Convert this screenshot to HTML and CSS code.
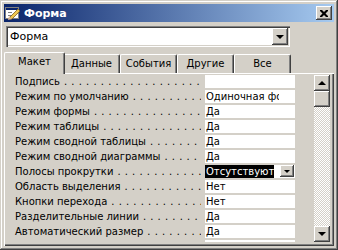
FILE: index.html
```html
<!DOCTYPE html>
<html lang="ru">
<head>
  <meta charset="UTF-8" />
  <title>Форма</title>
  <link rel="stylesheet" href="styles.css">
</head>
<body>
  <div class="window">
    <div class="titlebar">
      <svg class="app-icon" width="16" height="16" viewBox="0 0 16 16">
        <rect x="0.5" y="2.5" width="13" height="11" fill="#fff" stroke="#808080"/>
        <rect x="1" y="3" width="12" height="2" fill="#0a246a"/>
        <rect x="3" y="7" width="4" height="1" fill="#808080"/>
        <rect x="3" y="10" width="4" height="1" fill="#808080"/>
        <polygon points="5,12 13,4 15,6 7,14 5,14" fill="#f0c850" stroke="#806020" stroke-width="0.8"/>
        <polygon points="4,11 7,14 3,15" fill="#e0b890"/>
      </svg>
      <span class="title">Форма</span>
      <span class="close-btn">
        <svg width="8" height="7" viewBox="0 0 8 7">
          <path d="M0 0h2l2 2 2-2h2v1l-2.5 2.5 2.5 2.5v1h-2l-2-2-2 2h-2v-1l2.5-2.5-2.5-2.5z" fill="#000"/>
        </svg>
      </span>
    </div>

    <div class="object-select">
      <span class="object-name">Форма</span>
      <span class="drop-btn"><span class="arrow-down"></span></span>
    </div>

    <div class="tabs">
      <div class="tab active">Макет</div>
      <div class="tab">Данные</div>
      <div class="tab">События</div>
      <div class="tab">Другие</div>
      <div class="tab">Все</div>
    </div>

    <div class="panel">
      <div class="grid">
        <div class="row"><span class="label"><span class="name">Подпись</span></span><span class="value"></span></div>
        <div class="row"><span class="label"><span class="name">Режим по умолчанию</span></span><span class="value"><span class="text">Одиночная форма</span></span></div>
        <div class="row"><span class="label"><span class="name">Режим формы</span></span><span class="value"><span class="text">Да</span></span></div>
        <div class="row"><span class="label"><span class="name">Режим таблицы</span></span><span class="value"><span class="text">Да</span></span></div>
        <div class="row"><span class="label"><span class="name">Режим сводной таблицы</span></span><span class="value"><span class="text">Да</span></span></div>
        <div class="row"><span class="label"><span class="name">Режим сводной диаграммы</span></span><span class="value"><span class="text">Да</span></span></div>
        <div class="row"><span class="label"><span class="name">Полосы прокрутки</span></span><span class="value selected"><span class="text highlight">Отсутствуют</span><span class="cell-btn"><span class="arrow-down small"></span></span></span></div>
        <div class="row"><span class="label"><span class="name">Область выделения</span></span><span class="value"><span class="text">Нет</span></span></div>
        <div class="row"><span class="label"><span class="name">Кнопки перехода</span></span><span class="value"><span class="text">Нет</span></span></div>
        <div class="row"><span class="label"><span class="name">Разделительные линии</span></span><span class="value"><span class="text">Да</span></span></div>
        <div class="row"><span class="label"><span class="name">Автоматический размер</span></span><span class="value"><span class="text">Да</span></span></div>
        <div class="row"><span class="label"></span><span class="value"></span></div>
      </div>
      <div class="scrollbar">
        <span class="sb-btn"><span class="arrow-up"></span></span>
        <span class="sb-thumb"></span>
        <span class="sb-track"></span>
        <span class="sb-btn"><span class="arrow-down"></span></span>
      </div>
    </div>
  </div>
</body>
</html>
```

FILE: styles.css
```css
* {
  box-sizing: border-box;
}
body {
  margin: 0;
  font-family: "DejaVu Sans", Verdana, sans-serif;
  font-size: 10px;
  color: #000;
  background-color: #d4d0c8;
}
.window {
  width: 338px;
  height: 250px;
  padding: 4px;
  display: flex;
  flex-direction: column;
  background-color: #d4d0c8;
  box-shadow: inset -1px -1px #404040, inset 1px 1px #d4d0c8, inset -2px -2px #808080, inset 2px 2px #fff;
  overflow: hidden;
}
.titlebar {
  height: 18px;
  display: flex;
  align-items: center;
  padding: 0 2px 0 1px;
  background: linear-gradient(to right, #0a246a, #a6caf0);
  color: #fff;
  font-weight: bold;
  font-size: 11px;
}
.app-icon {
  margin-right: 3px;
}
.title {
  flex: 1;
}
.close-btn,
.drop-btn,
.cell-btn,
.sb-btn,
.sb-thumb {
  display: flex;
  align-items: center;
  justify-content: center;
  background-color: #d4d0c8;
  box-shadow: inset -1px -1px #404040, inset 1px 1px #fff, inset -2px -2px #808080;
}
.close-btn {
  width: 16px;
  height: 14px;
}
.object-select {
  height: 21px;
  margin: 4px 44px 0 2px;
  padding: 2px;
  display: flex;
  align-items: center;
  font-size: 11px;
  background-color: #fff;
  box-shadow: inset 1px 1px #808080, inset 2px 2px #404040, inset -1px -1px #fff, inset -2px -2px #d4d0c8;
}
.object-name {
  flex: 1;
  padding-left: 2px;
}
.drop-btn {
  width: 16px;
  height: 17px;
}
.arrow-down,
.arrow-up {
  width: 0;
  height: 0;
  border-left: 4px solid transparent;
  border-right: 4px solid transparent;
}
.arrow-down {
  border-top: 4px solid #000;
}
.arrow-up {
  border-bottom: 4px solid #000;
}
.arrow-down.small {
  border-left-width: 3px;
  border-right-width: 3px;
  border-top-width: 3px;
}
.tabs {
  display: flex;
  align-items: flex-end;
  height: 21px;
  margin-top: 5px;
  padding-left: 2px;
  position: relative;
  z-index: 1;
}
.tab {
  width: 57px;
  height: 19px;
  padding-top: 3px;
  text-align: center;
  background-color: #d4d0c8;
  border-top: 1px solid #fff;
  border-left: 1px solid #fff;
  border-right: 1px solid #404040;
  border-radius: 2px 2px 0 0;
  box-shadow: inset -1px 0 #808080;
}
.tab.active {
  height: 22px;
  width: 61px;
  margin: 0 -2px -1px -2px;
  padding-top: 3px;
  position: relative;
  z-index: 1;
}
.panel {
  flex: 1;
  display: flex;
  min-height: 0;
  padding: 1px 4px 4px 8px;
  border-top: 1px solid #fff;
  border-left: 1px solid #fff;
  box-shadow: inset -1px -1px #404040, inset -2px -2px #808080;
}
.grid {
  flex: 1;
  overflow: hidden;
}
.row {
  display: flex;
  height: 15px;
}
.label {
  width: 192px;
  display: flex;
  padding: 0 4px 0 2px;
  line-height: 13px;
  white-space: nowrap;
  overflow: hidden;
}
.label::after {
  content: ". . . . . . . . . . . . . . . . . . . . . . . . . . . . . . . . . . . . . . . .";
  flex: 1;
  padding-left: 4px;
  overflow: hidden;
  letter-spacing: 0.5px;
}
.value {
  width: 90px;
  height: 13px;
  line-height: 13px;
  display: flex;
  background-color: #fff;
  white-space: nowrap;
}
.text {
  max-width: 74px;
  padding-left: 1px;
  overflow: hidden;
}
.highlight {
  flex-shrink: 0;
  max-width: none;
  background-color: #000;
  color: #fff;
}
.cell-btn {
  width: 14px;
  height: 12px;
  margin-left: auto;
  margin-right: 1px;
}
.scrollbar {
  width: 16px;
  display: flex;
  flex-direction: column;
}
.sb-btn,
.sb-thumb {
  height: 16px;
}
.sb-track {
  flex: 1;
  background-image: conic-gradient(#fff 25%, #d4d0c8 0 50%, #fff 0 75%, #d4d0c8 0);
  background-size: 2px 2px;
}
```
